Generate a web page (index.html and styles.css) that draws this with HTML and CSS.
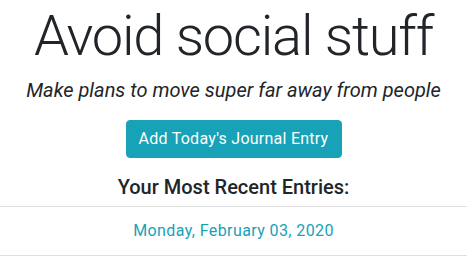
FILE: index.html
```html
<!DOCTYPE html>
<html lang="en">

<head>
    <meta charset="UTF-8">
    <title>Journal</title>

    <link rel="stylesheet" href="styles.css">
</head>

<body>

    <header class="top">
        <h1 class="titel">Avoid social stuff</h1>
        <p class="lead">Make plans to move super far away from people</p>
        <button class="knap">Add Today's Journal Entry</button>
    </header>

    <section class="seneste">
        <h5>Your Most Recent Entries:</h5>
        <ul class="liste">
            <li><a href="#">Monday, February 03, 2020</a></li>
        </ul>
    </section>

</body>

</html>
```

FILE: styles.css
```css
body {
    margin: 0;
    font-family: Roboto, "Liberation Sans", sans-serif;
    color: #212529;
    text-align: center;
}

.titel {
    font-size: 56px;
    font-weight: 300;
    line-height: 1.2;
    letter-spacing: -1.2px;
    margin: 3px 0 0;
}

.lead {
    font-size: 20px;
    font-style: italic;
    line-height: 1.5;
    margin: 5px 0 15px;
}

.knap {
    font-family: inherit;
    font-size: 16px;
    line-height: 1.5;
    letter-spacing: 0.25px;
    color: white;
    background-color: #17a2b8;
    border: 1px solid #17a2b8;
    border-radius: 4px;
    padding: 6px 12px;
    width: 216px;
    white-space: nowrap;
    cursor: pointer;
}

.seneste h5 {
    font-size: 20px;
    font-weight: 500;
    line-height: 1.2;
    margin: 17px 0 7px;
}

.liste {
    list-style: none;
    margin: 0;
    padding: 0;
}

.liste li {
    padding: 12px 20px;
    line-height: 24px;
    border-top: 1px solid #dfdfdf;
    border-bottom: 1px solid #dfdfdf;
}

.liste a {
    color: #17a2b8;
    letter-spacing: 0.4px;
    text-decoration: none;
}
```
